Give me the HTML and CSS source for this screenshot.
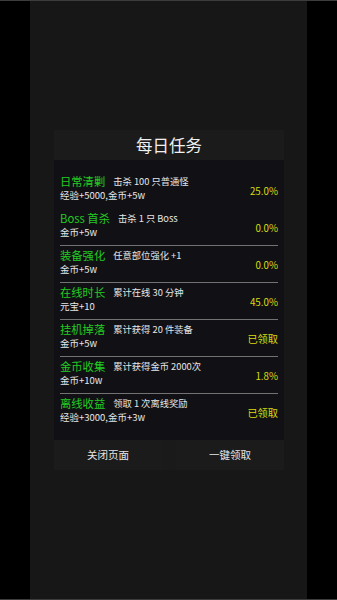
FILE: index.html
```html
<!DOCTYPE html>
<html lang="zh">
<head>
<meta charset="utf-8">
<link rel="stylesheet" href="styles.css">
</head>
<body>
<div class="frame">
  <div class="column">
    <div class="dialog">
      <div class="title">每日任务</div>
      <div class="list">
        <div class="row">
          <div class="info">
            <div class="line1"><span class="name">日常清剿</span><span class="desc">击杀 100 只普通怪</span></div>
            <div class="reward">经验+5000,金币+5w</div>
          </div>
          <div class="state">25.0%</div>
        </div>
        <div class="row nosep">
          <div class="info">
            <div class="line1"><span class="name">Boss 首杀</span><span class="desc">击杀 1 只 Boss</span></div>
            <div class="reward">金币+5w</div>
          </div>
          <div class="state">0.0%</div>
        </div>
        <div class="row">
          <div class="info">
            <div class="line1"><span class="name">装备强化</span><span class="desc">任意部位强化 +1</span></div>
            <div class="reward">金币+5w</div>
          </div>
          <div class="state">0.0%</div>
        </div>
        <div class="row">
          <div class="info">
            <div class="line1"><span class="name">在线时长</span><span class="desc">累计在线 30 分钟</span></div>
            <div class="reward">元宝+10</div>
          </div>
          <div class="state">45.0%</div>
        </div>
        <div class="row">
          <div class="info">
            <div class="line1"><span class="name">挂机掉落</span><span class="desc">累计获得 20 件装备</span></div>
            <div class="reward">金币+5w</div>
          </div>
          <div class="state done">已领取</div>
        </div>
        <div class="row">
          <div class="info">
            <div class="line1"><span class="name">金币收集</span><span class="desc">累计获得金币 2000次</span></div>
            <div class="reward">金币+10w</div>
          </div>
          <div class="state">1.8%</div>
        </div>
        <div class="row">
          <div class="info">
            <div class="line1"><span class="name">离线收益</span><span class="desc">领取 1 次离线奖励</span></div>
            <div class="reward">经验+3000,金币+3w</div>
          </div>
          <div class="state done">已领取</div>
        </div>
      </div>
      <div class="buttons">
        <div class="btn">关闭页面</div>
        <div class="btn">一键领取</div>
      </div>
    </div>
  </div>
</div>
</body>
</html>
```
FILE: styles.css
```css
html, body {
  margin: 0;
  padding: 0;
  background: #000;
}
body {
  font-family: "Noto Sans CJK SC", "Noto Sans", sans-serif;
  width: 337px;
  height: 600px;
  overflow: hidden;
}
.frame {
  height: 598px;
  border-top: 1px solid #3c3c3c;
  border-bottom: 1px solid #3c3c3c;
  display: flex;
  justify-content: flex-start;
}
.column {
  margin-left: 30px;
  width: 277px;
  height: 100%;
  background: #171717;
  padding-top: 129px;
  box-sizing: border-box;
}
.dialog {
  margin-left: 24px;
  width: 230px;
  display: flex;
  flex-direction: column;
}
.title {
  height: 30px;
  background: #1b1b1b;
  color: #f0f0f0;
  font-size: 16.5px;
  line-height: 30px;
  text-align: center;
}
.list {
  background: #111115;
  padding: 11px 6px 10px 6px;
}
.row {
  height: 37px;
  box-sizing: border-box;
  border-top: 1px solid #727272;
  display: flex;
  align-items: center;
  justify-content: space-between;
}
.row:first-child, .row.nosep {
  border-top-color: transparent;
}
.info {
  align-self: flex-start;
  padding-top: 2px;
}
.line1 {
  display: flex;
  align-items: center;
  height: 14px;
  white-space: nowrap;
}
.name {
  color: #22cc22;
  font-size: 11.3px;
  margin-right: 8px;
}
.desc {
  color: #e6e6e6;
  font-size: 9.3px;
}
.reward {
  color: #e6e6e6;
  font-size: 9.5px;
  height: 14px;
  line-height: 14px;
  white-space: nowrap;
}
.state {
  color: #dada10;
  font-size: 9.8px;
  margin-top: 1px;
}
.state.done {
  font-size: 10.2px;
}
.buttons {
  height: 30px;
  background: #1a1a1a;
  display: flex;
  justify-content: space-between;
}
.btn {
  width: 108px;
  height: 30px;
  line-height: 30px;
  text-align: center;
  color: #e6e6e6;
  font-size: 10.5px;
  background: #1b1b1b;
}
```
